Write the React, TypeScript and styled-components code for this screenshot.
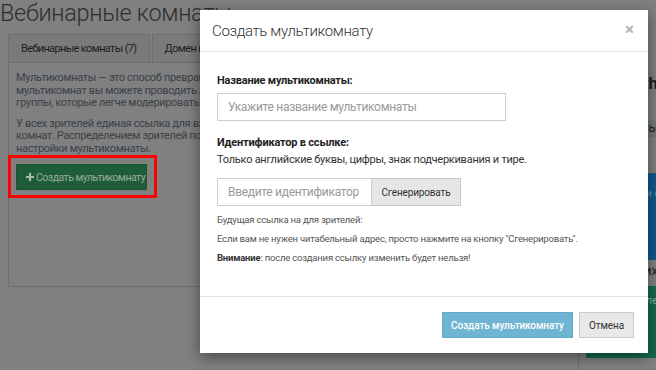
import styled, { createGlobalStyle } from "styled-components";

const GlobalStyle = createGlobalStyle`
  html, body {
    margin: 0;
    padding: 0;
    background: #808080;
  }
  body {
    font-family: Roboto, "Noto Sans", "Liberation Sans", sans-serif;
  }
`;

const Viewport = styled.div`
  position: relative;
  width: 656px;
  height: 370px;
  overflow: hidden;
  background: #808080;
`;

const Page = styled.div`
  display: grid;
  grid-template-columns: 562px 80px;
  column-gap: 8px;
  padding-left: 8px;
  width: 720px;
`;

const Main = styled.div`
  display: flex;
  flex-direction: column;
`;

const Title = styled.h1`
  margin: -2px 0 6px -8px;
  font-size: 23.5px;
  letter-spacing: -0.3px;
  line-height: 30px;
  font-weight: 300;
  color: #2e2e2e;
  white-space: nowrap;
`;

const Tabs = styled.div`
  display: flex;
  gap: 2px;
  height: 28px;
`;

const Tab = styled.div<{ $active?: boolean }>`
  display: flex;
  align-items: center;
  padding: 0 12px;
  font-size: 11px;
  letter-spacing: -0.65px;
  color: #1e1e1e;
  background: ${(p) => (p.$active ? "#7a7a7a" : "#7b7b7b")};
  border: 1px solid #6e6e6e;
  border-bottom: none;
  white-space: nowrap;
`;

const Panel = styled.div`
  height: 225px;
  box-sizing: border-box;
  border: 1px solid #6e6e6e;
  padding: 9px 7px;
`;

const Para = styled.p`
  margin: 0 0 8px;
  font-size: 11px;
  letter-spacing: -0.35px;
  line-height: 12.5px;
  color: #3a4249;
  white-space: nowrap;
`;

const Highlight = styled.div`
  position: relative;
  display: inline-block;
  margin-top: 1px;
  &::after {
    content: "";
    position: absolute;
    top: -9px;
    left: -8px;
    right: -10px;
    bottom: -8px;
    border: 3px solid #ff0000;
  }
`;

const GreenButton = styled.button`
  display: flex;
  align-items: center;
  gap: 2px;
  height: 26px;
  width: 131px;
  padding: 0 9px;
  border: 1px solid #1b5532;
  background: #1f5d38;
  color: #9aaa9e;
  font-family: inherit;
  font-size: 10.5px;
  letter-spacing: -0.5px;
  white-space: nowrap;
  svg {
    flex-shrink: 0;
  }
`;

const Sidebar = styled.div`
  display: flex;
  flex-direction: column;
  padding-top: 73px;
`;

const SideHead = styled.div`
  text-align: right;
  font-size: 17px;
  font-weight: 700;
  color: #1c1c1c;
  white-space: nowrap;
  height: 20px;
`;

const SideBand = styled.div`
  margin-top: 27px;
  height: 17px;
  background: #72787c;
  font-size: 12px;
  line-height: 17px;
  color: #202020;
  text-align: right;
`;

const BlueCard = styled.div`
  margin-top: 36px;
  height: 87px;
  flex-shrink: 0;
  background: #0e5a8c;
  color: #6f92ad;
  font-size: 11px;
  text-align: right;
  padding-top: 14px;
  box-sizing: border-box;
  white-space: nowrap;
  overflow: hidden;
`;

const SideText = styled.div`
  margin-top: 3px;
  height: 20px;
  text-align: right;
  font-size: 13px;
  color: #202020;
`;

const GreenWrap = styled.div`
  border-left: 1px solid #6d6d6d;
  padding: 3px 0 20px 7px;
`;

const GreenCard = styled.div`
  height: 72px;
  background: #146a4c;
  color: #88b3a2;
  font-size: 11px;
  text-align: right;
  padding-top: 8px;
  box-sizing: border-box;
`;

const Modal = styled.div`
  position: absolute;
  left: 200px;
  top: 10px;
  width: 448px;
  height: 343px;
  background: #fff;
  display: flex;
  flex-direction: column;
  box-shadow: 0 4px 14px rgba(0, 0, 0, 0.45);
`;

const Header = styled.div`
  display: flex;
  align-items: center;
  justify-content: space-between;
  height: 41px;
  padding: 0 14px 0 12px;
  border-bottom: 1px solid #e5e5e5;
`;

const ModalTitle = styled.div`
  font-size: 15px;
  letter-spacing: -0.35px;
  line-height: 20px;
  font-weight: 300;
  color: #333;
`;

const Close = styled.span`
  font-size: 17px;
  font-weight: 700;
  color: #b4b4b4;
  line-height: 1;
  margin-top: -3px;
`;

const Body = styled.div`
  flex: 1;
  padding: 21px 17px 0;
`;

const Label = styled.div<{ $gap?: number }>`
  font-size: 11px;
  letter-spacing: -0.2px;
  line-height: 15px;
  font-weight: 700;
  color: #222;
  margin-top: ${(p) => p.$gap ?? 0}px;
`;

const Hint = styled.div`
  font-size: 11px;
  letter-spacing: -0.25px;
  line-height: 16px;
  color: #333;
  margin-top: 2px;
`;

const Input = styled.input<{ $width: number }>`
  box-sizing: border-box;
  width: ${(p) => p.$width}px;
  height: 28px;
  border: 1px solid #ccc;
  padding: 0 10px;
  font-family: inherit;
  font-size: 12px;
  letter-spacing: -0.3px;
  color: #333;
  outline: none;
  &::placeholder {
    color: #9a9a9a;
  }
`;

const NameInput = styled(Input)`
  display: block;
  margin-top: 5px;
`;

const Group = styled.div`
  display: flex;
  margin-top: 10px;
  height: 28px;
`;

const GroupButton = styled.button`
  width: 89px;
  height: 28px;
  border: 1px solid #c8c8c8;
  border-left: none;
  background: #e6e6e6;
  font-family: inherit;
  font-size: 10px;
  letter-spacing: -0.15px;
  color: #333;
`;

const Note = styled.div`
  font-size: 9.5px;
  letter-spacing: -0.2px;
  line-height: 13px;
  color: #555;
  margin-top: 6px;
  b {
    color: #333;
  }
`;

const NoteFirst = styled(Note)`
  margin-top: 7px;
`;

const Footer = styled.div`
  display: flex;
  justify-content: flex-end;
  gap: 6px;
  height: 57px;
  box-sizing: border-box;
  padding: 15px 14px 0;
  border-top: 1px solid #e5e5e5;
`;

const FooterButton = styled.button<{ $primary?: boolean }>`
  width: ${(p) => (p.$primary ? 131 : 55)}px;
  height: 26px;
  padding: 0;
  font-family: inherit;
  font-size: 10px;
  letter-spacing: -0.1px;
  font-weight: ${(p) => (p.$primary ? 500 : 400)};
  color: ${(p) => (p.$primary ? "#fff" : "#333")};
  background: ${(p) => (p.$primary ? "#70b4d4" : "#e8e8e8")};
  border: 1px solid ${(p) => (p.$primary ? "#62a9cc" : "#cbcbcb")};
  white-space: nowrap;
`;

const Plus = () => (
  <svg width="8" height="8" viewBox="0 0 8 8">
    <path d="M2.9 0h2.2v2.9H8v2.2H5.1V8H2.9V5.1H0V2.9h2.9z" fill="#a8b8ac" />
  </svg>
);

export default function App() {
  return (
    <Viewport>
      <GlobalStyle />
      <Page>
        <Main>
          <Title>Вебинарные комнаты</Title>
          <Tabs>
            <Tab $active>Вебинарные комнаты (7)</Tab>
            <Tab>Домен и ссылки</Tab>
          </Tabs>
          <Panel>
            <Para>
              Мультикомнаты — это способ превращения одной вебинарной комнаты в несколько независимых. С помощью
              <br />
              мультикомнат вы можете проводить А/Б-тестирование, разделять зрителей на небольшие
              <br />
              группы, которые легче модерировать.
            </Para>
            <Para>
              У всех зрителей единая ссылка для входа, а система сама распределяет их по нескольким
              <br />
              комнат. Распределением зрителей по комнатам можно управлять в разделе
              <br />
              настройки мультикомнаты.
            </Para>
            <Highlight>
              <GreenButton>
                <Plus />
                Создать мультикомнату
              </GreenButton>
            </Highlight>
          </Panel>
        </Main>
        <Sidebar>
          <SideHead>Growth</SideHead>
          <SideBand>Вы</SideBand>
          <BlueCard>Пользователи онлайн</BlueCard>
          <SideText>их</SideText>
          <GreenWrap>
            <GreenCard>0 в зале</GreenCard>
          </GreenWrap>
        </Sidebar>
      </Page>

      <Modal>
        <Header>
          <ModalTitle>Создать мультикомнату</ModalTitle>
          <Close>×</Close>
        </Header>
        <Body>
          <Label>Название мультикомнаты:</Label>
          <NameInput $width={289} placeholder="Укажите название мультикомнаты" />
          <Label $gap={14}>Идентификатор в ссылке:</Label>
          <Hint>Только английские буквы, цифры, знак подчеркивания и тире.</Hint>
          <Group>
            <Input $width={155} placeholder="Введите идентификатор или оставьте пустым" />
            <GroupButton>Сгенерировать</GroupButton>
          </Group>
          <NoteFirst>Будущая ссылка на для зрителей:</NoteFirst>
          <Note>Если вам не нужен читабельный адрес, просто нажмите на кнопку "Сгенерировать".</Note>
          <Note>
            <b>Внимание</b>: после создания ссылку изменить будет нельзя!
          </Note>
        </Body>
        <Footer>
          <FooterButton $primary>Создать мультикомнату</FooterButton>
          <FooterButton>Отмена</FooterButton>
        </Footer>
      </Modal>
    </Viewport>
  );
}
